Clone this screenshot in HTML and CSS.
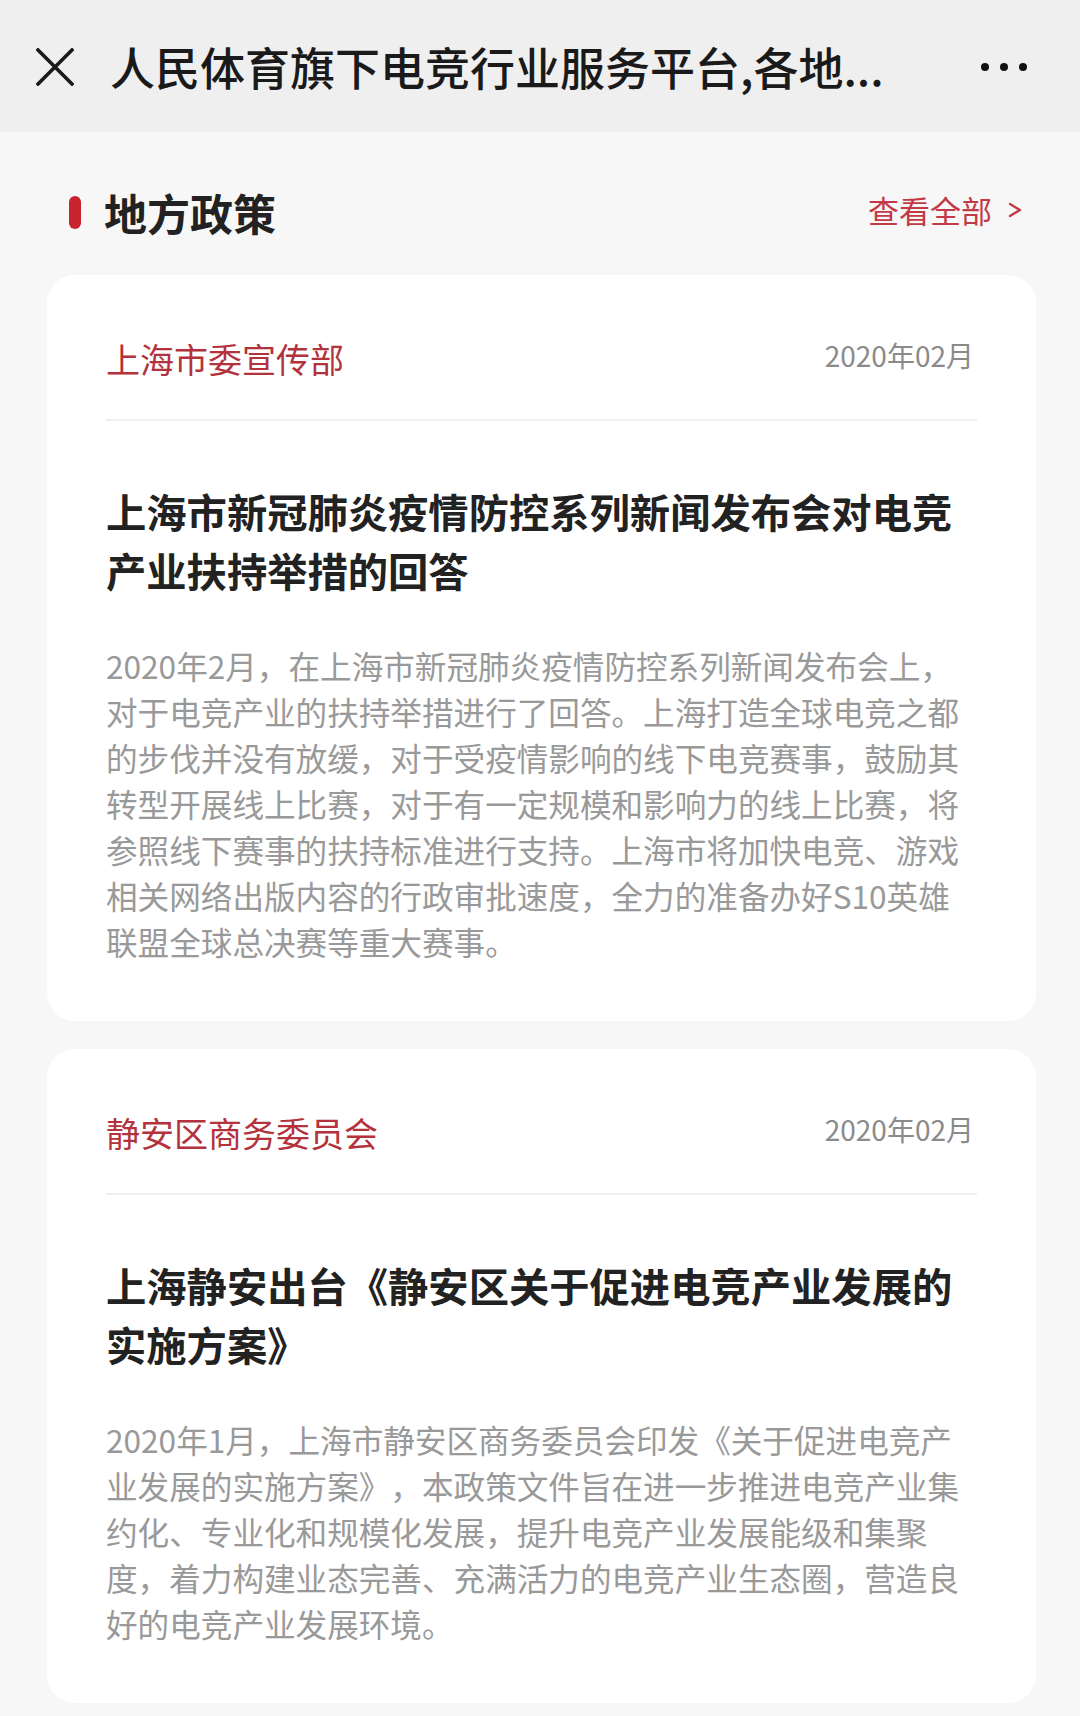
FILE: index.html
```html
<!DOCTYPE html>
<html lang="zh-CN">
<head>
<meta charset="utf-8">
<title>地方政策</title>
<link rel="stylesheet" href="styles.css">
</head>
<body>
<header class="topbar">
  <svg class="close" width="38" height="38" viewBox="0 0 38 38" aria-hidden="true">
    <path d="M2 2 L36 36 M36 2 L2 36" stroke="#1a1a1a" stroke-width="3.6" stroke-linecap="square" fill="none"/>
  </svg>
  <div class="topbar-title">人民体育旗下电竞行业服务平台,各地...</div>
  <div class="more"><span></span><span></span><span></span></div>
</header>

<main class="page">
  <div class="section-head">
    <div class="section-title">
      <span class="bar"></span>
      <h2>地方政策</h2>
    </div>
    <a class="view-all">查看全部
      <svg class="chev" width="14" height="18" viewBox="0 0 14 18" aria-hidden="true">
        <path d="M2 3 L12 9 L2 15" stroke="#c23a45" stroke-width="2.4" fill="none" stroke-linecap="round" stroke-linejoin="round"/>
      </svg>
    </a>
  </div>

  <article class="card">
    <div class="card-meta">
      <span class="source">上海市委宣传部</span>
      <span class="date">2020年02月</span>
    </div>
    <div class="divider"></div>
    <h3 class="card-title">上海市新冠肺炎疫情防控系列新闻发布会对电竞产业扶持举措的回答</h3>
    <p class="card-body">2020年2月，在上海市新冠肺炎疫情防控系列新闻发布会上，对于电竞产业的扶持举措进行了回答。上海打造全球电竞之都的步伐并没有放缓，对于受疫情影响的线下电竞赛事，鼓励其转型开展线上比赛，对于有一定规模和影响力的线上比赛，将参照线下赛事的扶持标准进行支持。上海市将加快电竞、游戏相关网络出版内容的行政审批速度，全力的准备办好S10英雄联盟全球总决赛等重大赛事。</p>
  </article>

  <article class="card">
    <div class="card-meta">
      <span class="source">静安区商务委员会</span>
      <span class="date">2020年02月</span>
    </div>
    <div class="divider"></div>
    <h3 class="card-title">上海静安出台《静安区关于促进电竞产业发展的实施方案》</h3>
    <p class="card-body">2020年1月，上海市静安区商务委员会印发《关于促进电竞产业发展的实施方案》，本政策文件旨在进一步推进电竞产业集约化、专业化和规模化发展，提升电竞产业发展能级和集聚度，着力构建业态完善、充满活力的电竞产业生态圈，营造良好的电竞产业发展环境。</p>
  </article>
</main>
</body>
</html>
```

FILE: styles.css
```css
html, body {
  margin: 0;
  padding: 0;
  background: #f7f7f7;
}

body {
  font-family: "Noto Sans CJK SC", "Noto Sans", sans-serif;
  color: #222;
  text-spacing-trim: space-all;
}

.topbar {
  height: 132px;
  background: #efefef;
  display: flex;
  align-items: center;
  padding: 2px 53px 0 36px;
  box-sizing: border-box;
}

.close {
  flex: none;
  display: block;
}

.topbar-title {
  flex: 1;
  margin-left: 36px;
  font-size: 45px;
  font-weight: 500;
  color: #1a1a1a;
  white-space: nowrap;
  line-height: 60px;
}

.more {
  display: flex;
  gap: 11px;
  flex: none;
}

.more span {
  width: 8px;
  height: 8px;
  border-radius: 50%;
  background: #111;
}

.page {
  padding: 0 44px 0 47px;
}

.section-head {
  margin-top: 52px;
  height: 56px;
  display: flex;
  align-items: center;
  justify-content: space-between;
  padding-left: 22px;
  padding-right: 14px;
}

.section-title {
  display: flex;
  align-items: center;
}

.bar {
  width: 12px;
  height: 33px;
  border-radius: 6px;
  background: #c8232e;
}

.section-title h2 {
  margin: 0 0 0 23px;
  font-size: 43px;
  font-weight: 700;
  color: #222;
  line-height: 56px;
}

.view-all {
  display: flex;
  align-items: center;
  gap: 16px;
  font-size: 31px;
  color: #c23a45;
  line-height: 40px;
  margin-top: -4px;
}

.chev {
  display: block;
}

.card {
  background: #fff;
  border-radius: 28px;
  padding: 62px 59px 57px;
  margin-top: 35px;
}

.card + .card {
  margin-top: 28px;
}

.card-meta {
  display: flex;
  justify-content: space-between;
  align-items: center;
  height: 44px;
}

.source {
  font-size: 34px;
  color: #b3323c;
  line-height: 44px;
}

.date {
  font-size: 28px;
  color: #8a8a8a;
  line-height: 36px;
  margin-bottom: 8px;
  margin-right: 3px;
}

.divider {
  height: 2px;
  background: #efefef;
  margin-top: 38px;
}

.card-title {
  margin: 60px 0 0;
  font-size: 40.3px;
  font-weight: 700;
  line-height: 59px;
  color: #222;
}

.card-body {
  margin: 43px 12px 0 0;
  font-size: 31.6px;
  line-height: 46px;
  color: #999;
}
```
